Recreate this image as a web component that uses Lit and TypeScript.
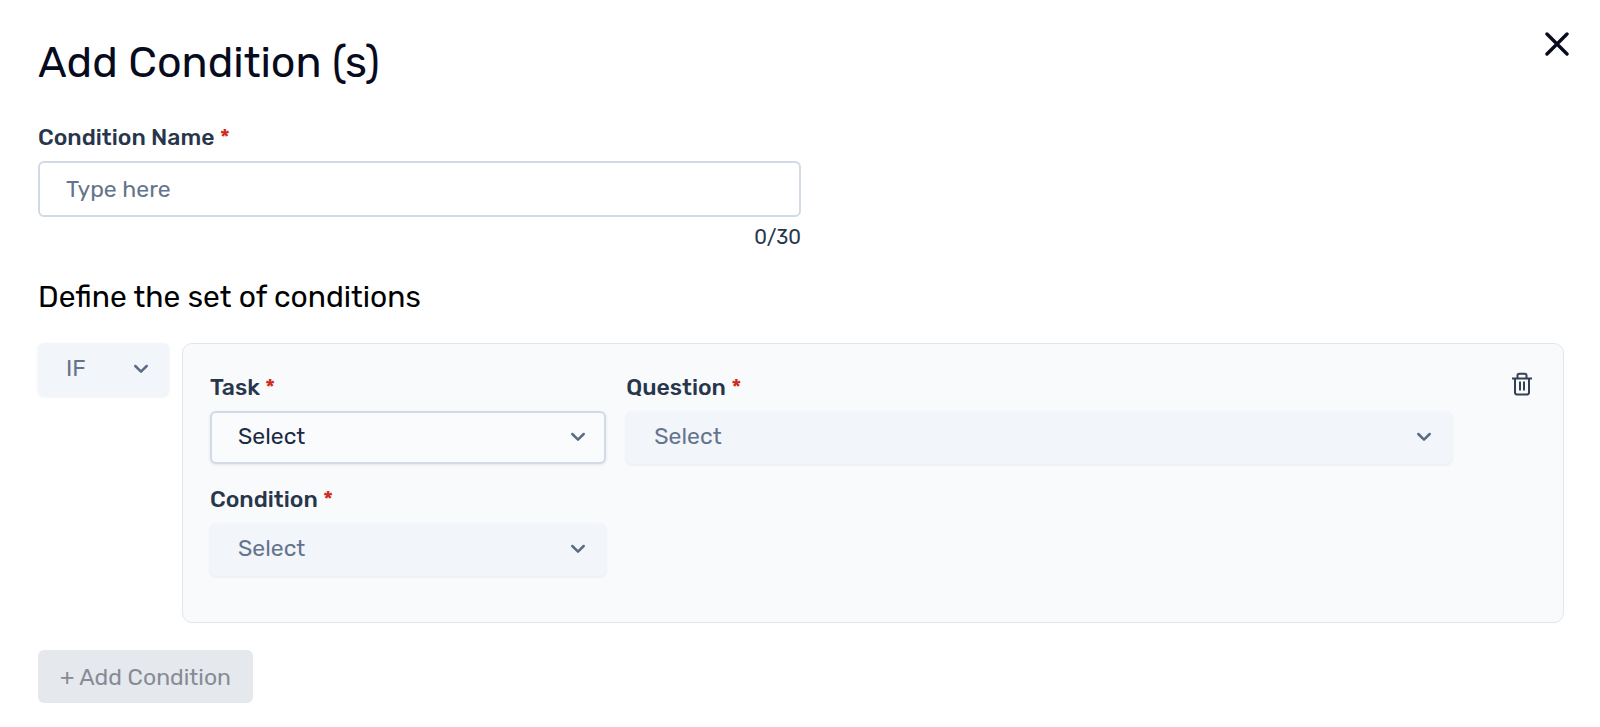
import { LitElement, html, css } from "lit";
import { customElement, property, state } from "lit/decorators.js";

@customElement("select-field")
class SelectField extends LitElement {
  @property() label = "";
  @property() name = "";
  @property() placeholder = "Select";
  @property({ type: Boolean }) disabled = false;
  @property({ type: Boolean, attribute: "hide-label" }) hideLabel = false;

  static styles = css`
    :host {
      display: block;
      min-width: 0;
      font-family: Rubik, Roboto, sans-serif;
    }
    .label {
      display: block;
      margin-bottom: 8px;
      font-size: 23px;
      line-height: 32px;
      font-weight: 500;
      color: #27364b;
    }
    .required {
      color: #cf2a20;
    }
    .control {
      display: grid;
      align-items: center;
    }
    .select {
      grid-area: 1 / 1;
      appearance: none;
      box-sizing: border-box;
      width: 100%;
      height: 53px;
      margin: 0;
      padding: 0 56px 3px 26px;
      border: 2px solid #d1dae6;
      border-radius: 6px;
      background: #fafbfd;
      box-shadow: 0 1px 3px rgba(30, 41, 70, 0.1);
      font: inherit;
      font-size: 23px;
      color: #1d2a44;
    }
    .select:disabled {
      border-color: transparent;
      background: #f2f5fa;
      box-shadow: 0 1px 3px rgba(30, 41, 70, 0.08);
      color: #64748b;
      opacity: 1;
    }
    .chevron {
      grid-area: 1 / 1;
      justify-self: end;
      margin-right: 20px;
      margin-bottom: 2px;
      pointer-events: none;
      fill: none;
      stroke: #5b6b85;
      stroke-width: 2.5;
      stroke-linecap: round;
      stroke-linejoin: round;
    }
  `;

  render() {
    return html`
      ${this.hideLabel
        ? null
        : html`<label class="label" for="field">${this.label} <span class="required">*</span></label>`}
      <div class="control">
        <select
          class="select"
          id="field"
          name=${this.name}
          aria-label=${this.label}
          ?disabled=${this.disabled}
        >
          <option>${this.placeholder}</option>
        </select>
        <svg class="chevron" width="16" height="10" viewBox="0 0 16 10" aria-hidden="true">
          <path d="M2.3 2 L8 7.6 L13.7 2" />
        </svg>
      </div>
    `;
  }
}

@customElement("app-root")
class AppRoot extends LitElement {
  @state() private conditionName = "";
  private readonly maxLength = 30;

  static styles = css`
    :host {
      display: block;
      background: #fff;
      color: #0a0c1f;
      font-family: Rubik, Roboto, sans-serif;
    }
    .dialog {
      padding: 32px 36px 24px 38px;
    }
    .header {
      display: flex;
      align-items: flex-start;
      justify-content: space-between;
      margin-right: -5px;
    }
    .title {
      margin: 0 0 27px;
      font-size: 43px;
      line-height: 62px;
      font-weight: 400;
      color: #070b1d;
    }
    .icon-button {
      display: flex;
      margin: 0;
      padding: 0;
      border: 0;
      background: none;
      cursor: pointer;
    }
    .close {
      fill: none;
      stroke: #070b1d;
      stroke-width: 3.4;
      stroke-linecap: round;
    }
    .name-field {
      width: 50%;
    }
    .label {
      display: block;
      margin-bottom: 8px;
      font-size: 23px;
      line-height: 32px;
      font-weight: 500;
      color: #27364b;
    }
    .required {
      color: #cf2a20;
    }
    .input {
      display: block;
      box-sizing: border-box;
      width: 100%;
      height: 56px;
      padding: 0 26px;
      border: 2px solid #d1dae6;
      border-radius: 6px;
      background: #fff;
      font: inherit;
      font-size: 23px;
      color: #1d2a44;
    }
    .input::placeholder {
      color: #64748b;
      opacity: 1;
    }
    .counter {
      margin-top: 4px;
      font-size: 20px;
      line-height: 32px;
      text-align: right;
      color: #27364b;
    }
    .subtitle {
      margin: 24px 0 26px;
      font-size: 30px;
      line-height: 40px;
      font-weight: 400;
      color: #000;
    }
    .rule {
      display: flex;
      align-items: flex-start;
      gap: 13px;
    }
    .operator {
      flex: 0 0 131px;
    }
    .card {
      flex: 1;
      display: flex;
      align-items: flex-start;
      justify-content: space-between;
      box-sizing: border-box;
      min-width: 0;
      padding: 27px 31px 46px 27px;
      border: 1px solid #dfe6ee;
      border-radius: 10px;
      background: #f9fafc;
    }
    .fields {
      flex: 1;
      display: grid;
      grid-template-columns: 12fr 25fr;
      gap: 19px 20px;
      margin-right: 60px;
    }
    .trash {
      margin-top: 1px;
      fill: none;
      stroke: #334155;
      stroke-width: 2;
    }
    .add {
      margin: 27px 0 0;
      height: 53px;
      padding: 0 22px;
      border: 0;
      border-radius: 6px;
      background: #e5e8ed;
      font: inherit;
      font-size: 23px;
      color: #868b95;
    }
  `;

  private onInput(e: Event) {
    this.conditionName = (e.target as HTMLInputElement).value;
  }

  render() {
    return html`
      <main class="dialog">
        <header class="header">
          <h1 class="title">Add Condition (s)</h1>
          <button class="icon-button" type="button" aria-label="Close">
            <svg class="close" width="24" height="24" viewBox="0 0 24 24" aria-hidden="true">
              <path d="M2 2 L22 22 M22 2 L2 22" />
            </svg>
          </button>
        </header>

        <div class="name-field">
          <label class="label" for="condition-name">Condition Name <span class="required">*</span></label>
          <input
            class="input"
            id="condition-name"
            type="text"
            placeholder="Type here"
            maxlength=${this.maxLength}
            .value=${this.conditionName}
            @input=${this.onInput}
          />
          <div class="counter">${this.conditionName.length}/${this.maxLength}</div>
        </div>

        <h2 class="subtitle">Define the set of conditions</h2>

        <section class="rule">
          <select-field class="operator" label="Operator" name="operator" placeholder="IF" hide-label disabled></select-field>
          <div class="card">
            <div class="fields">
              <select-field label="Task" name="task"></select-field>
              <select-field label="Question" name="question" disabled></select-field>
              <select-field label="Condition" name="condition" disabled></select-field>
            </div>
            <button class="icon-button" type="button" aria-label="Delete">
              <svg class="trash" width="20" height="24" viewBox="0 0 20 24" aria-hidden="true">
                <path d="M0 6.5 H20" />
                <path d="M5.5 6.5 V3.6 Q5.5 1.8 7.3 1.8 H12.7 Q14.5 1.8 14.5 3.6 V6.5" />
                <path d="M3 6.5 V20.6 Q3 22.4 4.8 22.4 H15.2 Q17 22.4 17 20.6 V6.5" />
                <path d="M8 9.5 V18.5 M12 9.5 V18.5" />
              </svg>
            </button>
          </div>
        </section>

        <button class="add" type="button" disabled>+ Add Condition</button>
      </main>
    `;
  }
}
